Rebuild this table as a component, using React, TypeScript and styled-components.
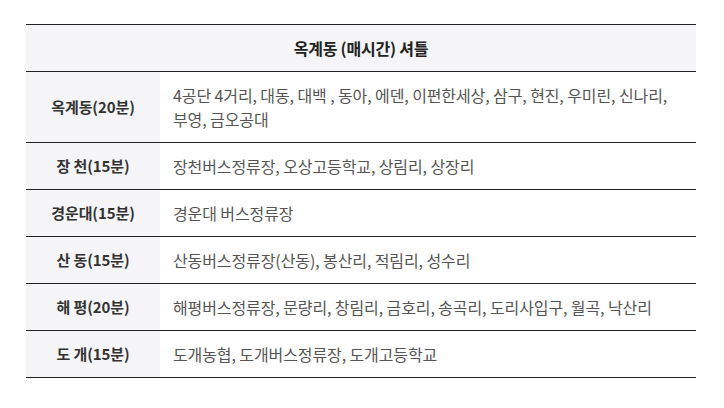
import React from "react";
import styled, {createGlobalStyle} from "styled-components";

const GlobalStyle = createGlobalStyle`
    body {
        margin: 0;
        background: #fff;
        font-family: "Noto Sans CJK KR", "Noto Sans", sans-serif;
    }
`

const Wrapper = styled.div`
    padding: 24px 0 0 26px;
`

const ShuttleTable = styled.table`
    width: 670px;
    border-collapse: collapse;
    border-top: 1px solid #222;
    font-size: 16px;
    line-height: 24px;
    letter-spacing: -0.1px;

    tr {
        border-bottom: 1px solid #222;
    }
`

const HeadCell = styled.th`
    padding: 11px 12px;
    background: #f5f5f7;
    color: #222;
    font-weight: 700;
    letter-spacing: -0.2px;
    text-align: center;
`

const StopLabel = styled.th`
    width: 134px;
    box-sizing: border-box;
    padding: 11px 6px;
    background: #f5f5f7;
    color: #333;
    font-size: 15px;
    font-weight: 700;
    text-align: center;
    white-space: nowrap;
`

const StopList = styled.td`
    padding: 11px 12px 11px 13px;
    color: #555;
    text-align: left;
`

const routes = [
    {label: "옥계동(20분)", stops: "4공단 4거리, 대동, 대백 , 동아, 에덴, 이편한세상, 삼구, 현진, 우미린, 신나리, 부영, 금오공대"},
    {label: "장 천(15분)", stops: "장천버스정류장, 오상고등학교, 상림리, 상장리"},
    {label: "경운대(15분)", stops: "경운대 버스정류장"},
    {label: "산 동(15분)", stops: "산동버스정류장(산동), 봉산리, 적림리, 성수리"},
    {label: "해 평(20분)", stops: "해평버스정류장, 문량리, 창림리, 금호리, 송곡리, 도리사입구, 월곡, 낙산리"},
    {label: "도 개(15분)", stops: "도개농협, 도개버스정류장, 도개고등학교"},
]

export default function App() {
    return (
        <>
            <GlobalStyle/>
            <Wrapper>
                <ShuttleTable>
                    <thead>
                        <tr>
                            <HeadCell colSpan={2}>옥계동 (매시간) 셔틀</HeadCell>
                        </tr>
                    </thead>
                    <tbody>
                        {routes.map((route, i) => (
                            <tr key={i}>
                                <StopLabel scope="row">{route.label}</StopLabel>
                                <StopList>{route.stops}</StopList>
                            </tr>
                        ))}
                    </tbody>
                </ShuttleTable>
            </Wrapper>
        </>
    )
}
